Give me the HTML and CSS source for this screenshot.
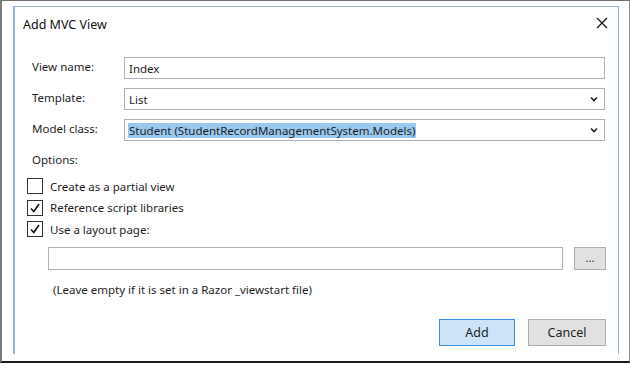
FILE: index.html
```html
<!DOCTYPE html>
<html lang="en">
<head>
    <meta charset="UTF-8">
    <title>Add MVC View</title>
    <link rel="stylesheet" href="styles.css">
</head>
<body>
    <div class="frame">
        <div class="dialog">
            <div class="titlebar">
                <span class="title">Add MVC View</span>
                <svg class="close" width="12" height="12" viewBox="0 0 12 12">
                    <path d="M1 1 L11 11 M11 1 L1 11" stroke="#111" stroke-width="1.2" fill="none"/>
                </svg>
            </div>

            <div class="fields">
                <label class="label">View name:</label>
                <div class="input">Index</div>

                <label class="label">Template:</label>
                <div class="input select">
                    <span>List</span>
                    <svg class="chevron" width="8" height="6" viewBox="0 0 8 6">
                        <path d="M1 1.5 L4 4.5 L7 1.5" stroke="#222" stroke-width="1.6" fill="none"/>
                    </svg>
                </div>

                <label class="label">Model class:</label>
                <div class="input select">
                    <span class="selected">Student (StudentRecordManagementSystem.Models)</span>
                    <svg class="chevron" width="8" height="6" viewBox="0 0 8 6">
                        <path d="M1 1.5 L4 4.5 L7 1.5" stroke="#222" stroke-width="1.6" fill="none"/>
                    </svg>
                </div>
            </div>

            <div class="options-label">Options:</div>

            <div class="options">
                <div class="check-row">
                    <span class="box"></span>
                    <span>Create as a partial view</span>
                </div>
                <div class="check-row">
                    <span class="box">
                        <svg width="12" height="12" viewBox="0 0 12 12">
                            <path d="M2 6.5 L4.8 9.5 L10 2" stroke="#111" stroke-width="1.6" fill="none"/>
                        </svg>
                    </span>
                    <span>Reference script libraries</span>
                </div>
                <div class="check-row">
                    <span class="box">
                        <svg width="12" height="12" viewBox="0 0 12 12">
                            <path d="M2 6.5 L4.8 9.5 L10 2" stroke="#111" stroke-width="1.6" fill="none"/>
                        </svg>
                    </span>
                    <span>Use a layout page:</span>
                </div>
            </div>

            <div class="layout-row">
                <div class="input layout-input"></div>
                <div class="browse">...</div>
            </div>

            <div class="hint">(Leave empty if it is set in a Razor _viewstart file)</div>

            <div class="buttons">
                <div class="btn primary">Add</div>
                <div class="btn">Cancel</div>
            </div>
        </div>
    </div>
</body>
</html>
```

FILE: styles.css
```css
* {
    box-sizing: border-box;
}
body {
    margin: 0;
    background: #fff;
    font-family: "Noto Sans", "Open Sans", sans-serif;
    font-size: 11.5px;
    color: #1e1e1e;
}
.frame {
    width: 630px;
    height: 363px;
    border-top: 1px solid #6f6f6f;
    border-left: 2px solid #7a7a7a;
    border-right: 1px solid #8a8a8a;
    border-bottom: 2px solid #1a1a1a;
    padding: 5px 0 0 11px;
    overflow: hidden;
}
.dialog {
    width: 606px;
    height: 348px;
    border: 1px solid #8fb5d8;
    border-left: 2px solid #8fb5d8;
    border-bottom: none;
    background: #fff;
}
.titlebar {
    height: 34px;
    display: flex;
    align-items: center;
    justify-content: space-between;
    padding: 0 10px 0 8px;
}
.title {
    font-size: 12.5px;
    color: #111;
}
.close {
    margin-top: -2px;
}
.fields {
    display: grid;
    grid-template-columns: 92px 481px;
    row-gap: 9px;
    padding: 16px 0 0 17px;
}
.label {
    display: flex;
    align-items: center;
    height: 22px;
    margin-top: -2px;
}
.input {
    height: 22px;
    border: 1px solid #abb0ba;
    background: #fff;
    padding: 0 4px;
    display: flex;
    align-items: center;
}
.select {
    justify-content: space-between;
    padding-right: 6px;
}
.selected {
    background: #99c9ef;
    padding: 0 1px;
    margin-left: -1px;
}
.options-label {
    margin: 11px 0 0 17px;
    height: 16px;
    line-height: 16px;
}
.options {
    margin: 10px 0 0 12px;
    display: flex;
    flex-direction: column;
    gap: 5.5px;
}
.check-row {
    display: flex;
    align-items: center;
    gap: 7px;
    height: 16px;
}
.box {
    width: 16px;
    height: 16px;
    border: 1px solid #333;
    background: #fff;
    display: flex;
    align-items: center;
    justify-content: center;
}
.layout-row {
    display: flex;
    margin: 10px 0 0 33px;
    gap: 11px;
}
.layout-input {
    width: 515px;
    height: 23px;
}
.browse {
    width: 32px;
    height: 23px;
    border: 1px solid #adadad;
    background: #e1e1e1;
    text-align: center;
    line-height: 19px;
    font-size: 11px;
}
.hint {
    margin: 12px 0 0 38px;
    height: 16px;
    line-height: 16px;
}
.buttons {
    display: flex;
    justify-content: flex-end;
    gap: 13px;
    margin: 21px 12px 0 0;
}
.btn {
    width: 78px;
    height: 27px;
    border: 1px solid #adadad;
    background: #e1e1e1;
    display: flex;
    align-items: center;
    justify-content: center;
    font-size: 12.5px;
}
.btn.primary {
    width: 76px;
    background: #cce4f7;
    border-color: #3c8fdc;
}
```
